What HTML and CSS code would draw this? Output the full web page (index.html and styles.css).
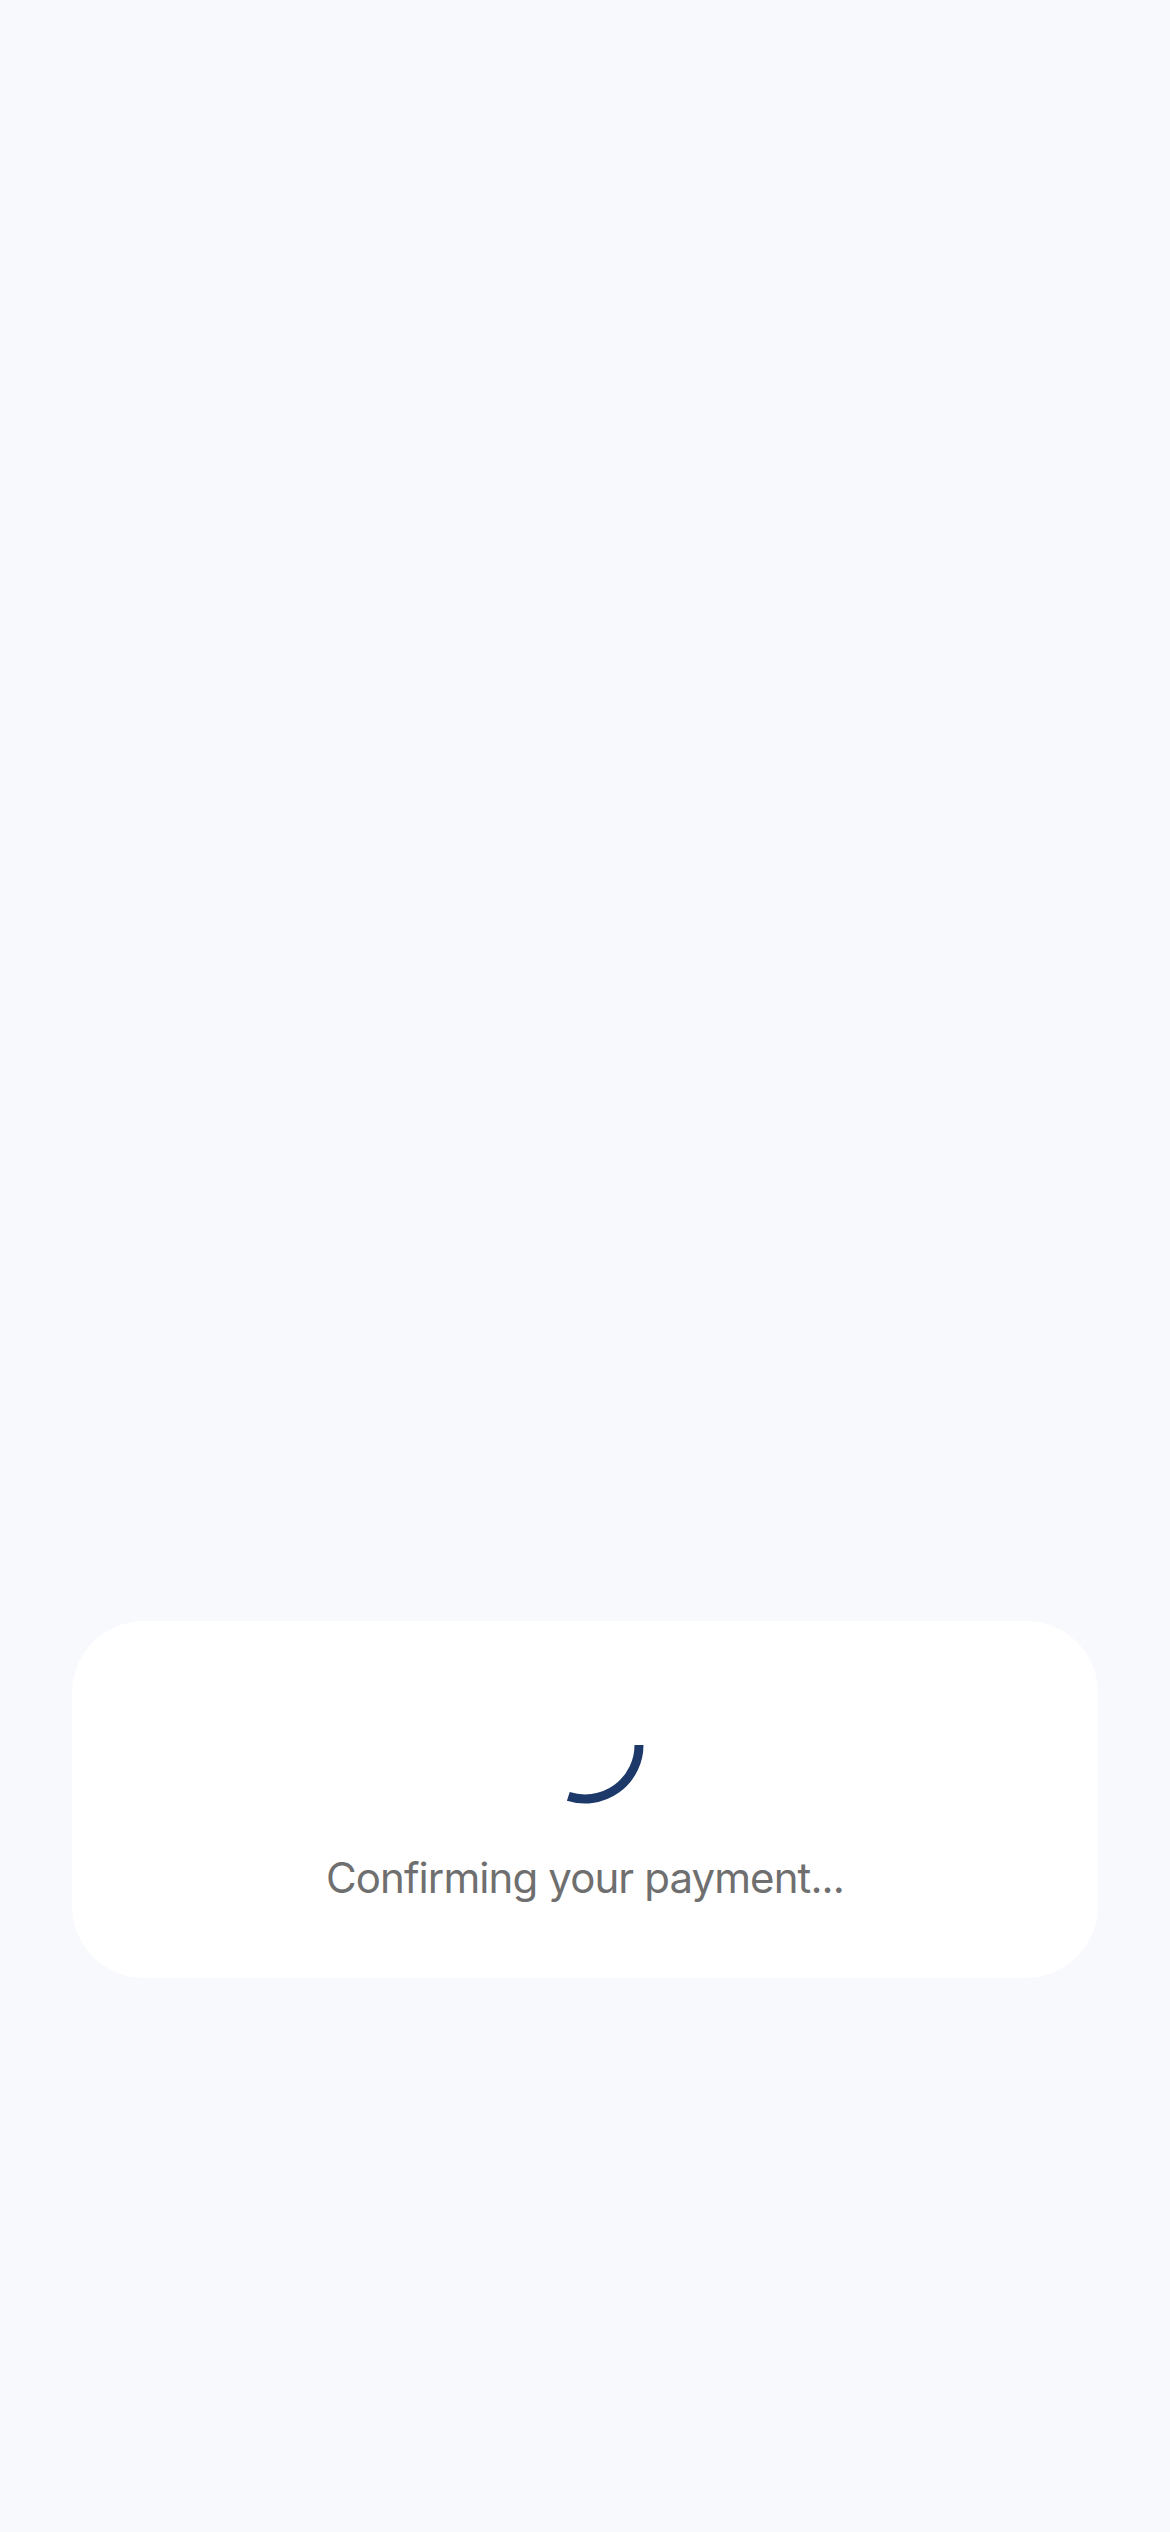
FILE: index.html
```html
<!DOCTYPE html>
<html lang="en">
<head>
    <meta charset="UTF-8">
    <meta name="viewport" content="width=device-width, initial-scale=1.0">
    <title>Confirming payment</title>
    <link rel="stylesheet" href="styles.css">
</head>
<body>
    <div class="page">
        <div class="card">
            <svg class="spinner" viewBox="0 0 40 40" aria-hidden="true">
                <path d="M38 20 A18 18 0 0 1 14.44 37.12" fill="none" stroke="#1c3969" stroke-width="3"/>
            </svg>
            <p class="status">Confirming your payment...</p>
        </div>
    </div>
</body>
</html>
```

FILE: styles.css
```css
body {
    margin: 0;
    background-color: #f8f9fc;
    font-family: Inter, "Noto Sans", sans-serif;
}
.page {
    min-height: 2532px;
    box-sizing: border-box;
    padding: 1621px 72px 0;
}
.card {
    background-color: #fff;
    border-radius: 72px;
    padding: 64px 40px 70px;
    display: flex;
    flex-direction: column;
    align-items: center;
    gap: 43px;
}
.spinner {
    width: 120px;
    height: 120px;
    display: block;
}
.status {
    margin: 0;
    font-size: 42px;
    line-height: 60px;
    letter-spacing: -0.9px;
    color: #6f6f6f;
}
```
